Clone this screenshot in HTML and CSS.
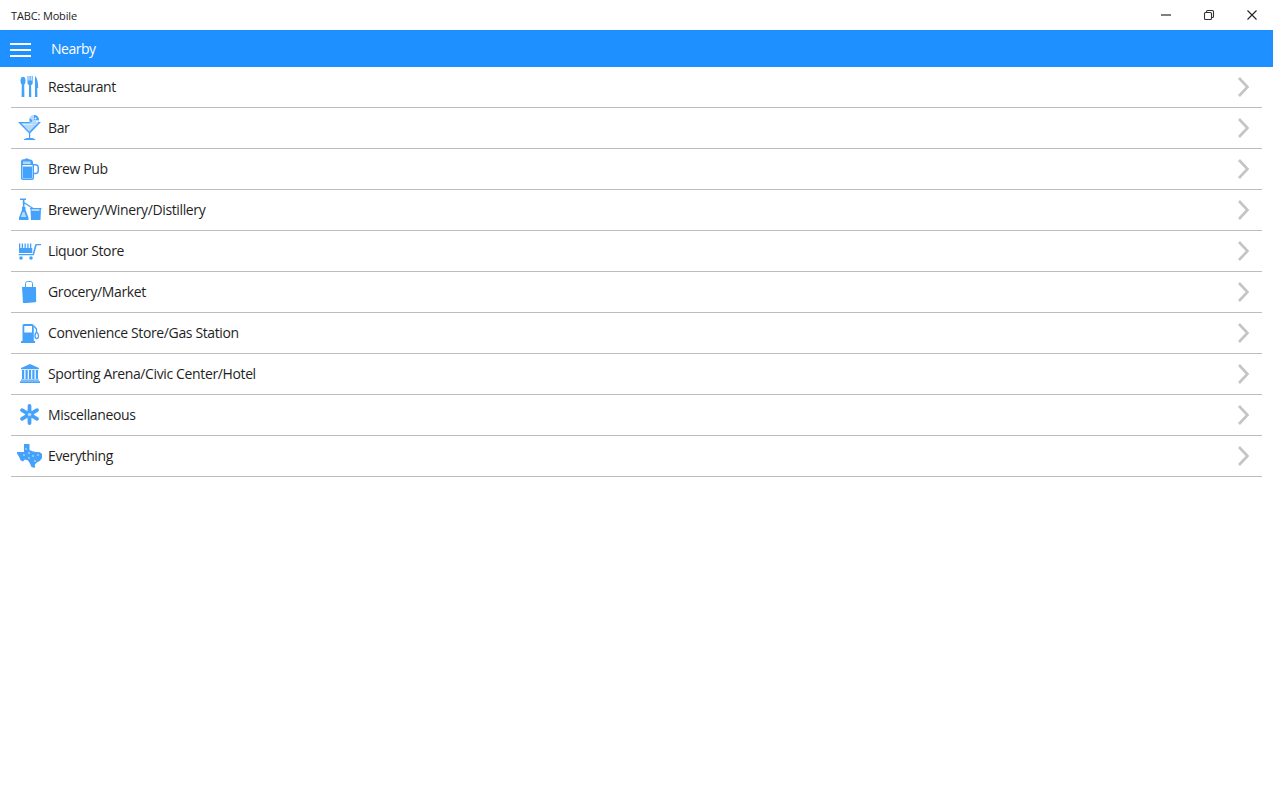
FILE: index.html
```html
<!DOCTYPE html>
<html lang="en">
<head>
    <meta charset="UTF-8">
    <meta name="viewport" content="width=device-width, initial-scale=1.0">
    <title>TABC: Mobile</title>
    <link rel="stylesheet" href="styles.css">
</head>
<body>

    <!-- Window title bar -->
    <div class="titlebar">
        <span class="app-title">TABC: Mobile</span>
        <div class="window-buttons">
            <span class="window-button">
                <svg width="12" height="12" viewBox="0 0 12 12"><path d="M1 6h10" stroke="#555" stroke-width="1.500"/></svg>
            </span>
            <span class="window-button">
                <svg width="12" height="12" viewBox="0 0 12 12" fill="none" stroke="#333" stroke-width="1.100"><rect x="1.500" y="3.500" width="7" height="7" rx="1"/><path d="M3.500 3.500v-1a1 1 0 0 1 1-1h5a1 1 0 0 1 1 1v5a1 1 0 0 1-1 1h-1"/></svg>
            </span>
            <span class="window-button">
                <svg width="12" height="12" viewBox="0 0 12 12"><path d="M1.500 1.500l9 9M10.500 1.500l-9 9" stroke="#222" stroke-width="1.100"/></svg>
            </span>
        </div>
    </div>

    <div class="appbar">
        <span class="hamburger"><i></i><i></i><i></i></span>
        <span class="page-title">Nearby</span>
    </div>

    <ul class="category-list">
        <li class="category">
            <svg class="category-icon" viewBox="0 0 30 30">
                <ellipse cx="8" cy="8.800" rx="2.500" ry="4"/>
                <path d="M6.800 11h2.400l.2 14H6.600z"/>
                <path d="M12.500 4h1v4.500h1V4h1.200v4.500h1V4h1v7c0 1-.7 1.700-1.600 2l.2 12h-2.400l.2-12c-.9-.3-1.600-1-1.600-2z"/>
                <path d="M20 4c2 1.500 3.200 6 3.200 12h-1l.2 9H20z"/>
            </svg>
            <span class="category-name">Restaurant</span>
            <svg class="chevron" viewBox="0 0 14 24"><path d="M3 3l8.500 9L3 21"/></svg>
        </li>
        <li class="category">
            <svg class="category-icon" viewBox="0 0 30 30">
                <path class="icon-light" d="M6 11.500h16l-8 8.500z"/>
                <path d="M3 9h23l-10.800 11.300V25c2 .1 4 .4 5 1.300v.7H9v-.7c1-.9 3-1.200 5-1.300v-4.700zM6.500 10.500l7.800 8.300 8-8.300z" fill-rule="evenodd"/>
                <circle class="icon-light" cx="19" cy="7" r="5"/>
                <path d="M19 2a5 5 0 0 1 5 5h-5zM14.500 5.500l3 1.500-1.500 3a5 5 0 0 1-1.500-4.500z"/>
                <circle class="icon-dot" cx="20.500" cy="5.500" r="1"/>
                <circle class="icon-dot" cx="22" cy="8.500" r=".8"/>
            </svg>
            <span class="category-name">Bar</span>
            <svg class="chevron" viewBox="0 0 14 24"><path d="M3 3l8.500 9L3 21"/></svg>
        </li>
        <li class="category">
            <svg class="category-icon" viewBox="0 0 30 30">
                <path d="M6 8c0-2 1.500-3 3-2.500C10 4 13.500 4 14.500 5.500c1.800-.5 3.500.8 3.500 2.800V10h2.500c2 0 3.500 1.300 3.500 3.300v3.400c0 2-1.500 3.500-3.500 3.500H19V24c0 1.300-.7 2-2 2H8c-1.300 0-2-.7-2-2zM7.500 11v13c0 .4.200.6.500.6h9c.3 0 .5-.2.500-.6V11zM19 11.500v7.200h1.500c1.200 0 2-.8 2-2v-3.400c0-1-.8-1.800-2-1.800z" fill-rule="evenodd"/>
                <path d="M8 12.500h9V24.200H8z"/>
                <path class="icon-light" d="M8 7.500h7.500v2.500H8z"/>
            </svg>
            <span class="category-name">Brew Pub</span>
            <svg class="chevron" viewBox="0 0 14 24"><path d="M3 3l8.500 9L3 21"/></svg>
        </li>
        <li class="category">
            <svg class="category-icon" viewBox="0 0 30 30">
                <path d="M5 3.500h6V5H9.500v2.200l9 5.800-.7 1.100-8.300-5.300V12h1v3l3 7.500V25H4v-2.500L7 15v-3h.8V5H5z"/>
                <path class="icon-light" d="M7.800 17h1.500l2 5H5.800z"/>
                <path d="M15 13h11.500v1H26l-.5 11h-9.500l-.5-11H15z"/>
                <path class="icon-gap" d="M16.600 14.200h7.800v1.600h-7.800z"/>
            </svg>
            <span class="category-name">Brewery/Winery/Distillery</span>
            <svg class="chevron" viewBox="0 0 14 24"><path d="M3 3l8.500 9L3 21"/></svg>
        </li>
        <li class="category">
            <svg class="category-icon" viewBox="0 0 30 30">
                <path d="M4 7.500h1.300V12h1.400V7.500H8V12h1.500V7.500h1.300V12h1.500V7.500h1.300V12h1.400V7.500h1.300V12h1v5H4z"/>
                <path d="M3.700 18h14l2.300-9c.2-.7.700-1 1.300-1H26v1.300h-4.300l-2.800 10H3.700z"/>
                <circle cx="6" cy="22" r="1.800"/>
                <circle cx="16" cy="22" r="1.800"/>
            </svg>
            <span class="category-name">Liquor Store</span>
            <svg class="chevron" viewBox="0 0 14 24"><path d="M3 3l8.500 9L3 21"/></svg>
        </li>
        <li class="category">
            <svg class="category-icon" viewBox="0 0 30 30">
                <path d="M7 10h14l.2 15c-4.500.7-9 .9-13.200 1z"/>
                <path class="icon-handle" d="M10.500 11V6.500c0-1.200.8-2 2-2h3c1.200 0 2 .8 2 2V11"/>
            </svg>
            <span class="category-name">Grocery/Market</span>
            <svg class="chevron" viewBox="0 0 14 24"><path d="M3 3l8.500 9L3 21"/></svg>
        </li>
        <li class="category">
            <svg class="category-icon" viewBox="0 0 30 30">
                <path d="M9 6h8c1 0 1.800.8 1.800 1.800V23H7.500V7.800C7.500 6.800 8 6 9 6zM9.300 8v6.500h7.700V8z" fill-rule="evenodd"/>
                <path d="M6 23h14v2H6z"/>
                <path class="icon-hose" d="M19 8l2.500 3v3c1.300 1 2 2.500 2 4 0 1.500-.7 2.500-1.700 2.500s-1.800-1-1.800-2.500c0-1.500.6-3 1.500-4"/>
            </svg>
            <span class="category-name">Convenience Store/Gas Station</span>
            <svg class="chevron" viewBox="0 0 14 24"><path d="M3 3l8.500 9L3 21"/></svg>
        </li>
        <li class="category">
            <svg class="category-icon" viewBox="0 0 30 30">
                <path d="M15 5l9 4v1.300H6V9z"/>
                <path d="M7 11h2.200v9H7zM10.500 11h2.200v9h-2.200zM13.900 11h2.200v9h-2.200zM17.300 11h2.200v9h-2.200zM20.800 11H23v9h-2.200z"/>
                <path d="M6 20.500h18v1.300H6zM5 22.300h20V24H5z"/>
            </svg>
            <span class="category-name">Sporting Arena/Civic Center/Hotel</span>
            <svg class="chevron" viewBox="0 0 14 24"><path d="M3 3l8.500 9L3 21"/></svg>
        </li>
        <li class="category">
            <svg class="category-icon" viewBox="0 0 30 30">
                <circle class="icon-light" cx="14.500" cy="14.500" r="4.500"/>
                <path class="icon-petals" d="M14.500 6v5M14.500 18v5M7 10.200l4.500 2.600M17.500 16.200l4.500 2.600M7 18.800l4.500-2.600M17.500 12.800l4.500-2.600"/>
            </svg>
            <span class="category-name">Miscellaneous</span>
            <svg class="chevron" viewBox="0 0 14 24"><path d="M3 3l8.500 9L3 21"/></svg>
        </li>
        <li class="category">
            <svg class="category-icon" viewBox="0 0 30 30">
                <path d="M9 3h5.500v6l3 1.300 3.500.7 4 .2 2 1.800v4l-2 2.700-3.500 2-1.500 1.700-.2 3.600-3.300-1-1.700-3.700-2-3-3-.7-1.800 2-2.500-1.300-1.500-3.500L2 12.500v-1.500h7z"/>
                <g class="icon-dots">
                    <circle cx="11" cy="8" r=".9"/>
                    <circle cx="9" cy="14" r=".9"/>
                    <circle cx="14" cy="12" r=".9"/>
                    <circle cx="18" cy="15" r=".9"/>
                    <circle cx="23" cy="14" r=".9"/>
                    <circle cx="14" cy="17" r=".9"/>
                    <circle cx="20" cy="20" r=".9"/>
                </g>
            </svg>
            <span class="category-name">Everything</span>
            <svg class="chevron" viewBox="0 0 14 24"><path d="M3 3l8.500 9L3 21"/></svg>
        </li>
    </ul>

</body>
</html>
```

FILE: styles.css
```css
body {
    margin: 0;
    font-family: "Open Sans", "Noto Sans", sans-serif;
    background: #fff;
    color: #1f1f1f;
}

/* Title bar */
.titlebar {
    display: flex;
    align-items: center;
    height: 30px;
    padding-left: 11px;
}
.app-title {
    font-size: 11px;
    letter-spacing: -0.15px;
    color: #222;
}
.window-buttons {
    display: flex;
    margin-left: auto;
}
.window-button {
    display: flex;
    align-items: center;
    justify-content: center;
    width: 43px;
    height: 30px;
}

/* App bar */
.appbar {
    display: flex;
    align-items: center;
    height: 37px;
    background: #1e90ff;
    color: #fff;
}
.hamburger {
    display: flex;
    flex-direction: column;
    gap: 4px;
    width: 21px;
    margin-left: 10px;
    margin-top: 3px;
}
.hamburger i {
    display: block;
    height: 2px;
    background: #fff;
}
.page-title {
    margin-left: 20px;
    font-size: 14px;
    letter-spacing: -0.5px;
}

/* Category rows */
.category-list {
    list-style: none;
    margin: 0 11px;
    padding: 0;
}
.category {
    display: flex;
    align-items: center;
    height: 40px;
    border-bottom: 1px solid #bdbdbd;
}
.category-icon {
    width: 30px;
    height: 30px;
    margin-left: 4px;
    fill: #45a2fb;
}
.category-icon .icon-light {
    fill: #b5dafd;
}
.category-icon .icon-dot {
    fill: #fff;
}
.category-icon .icon-dots {
    fill: #a9d4fd;
}
.category-icon .icon-gap {
    fill: #d5eafe;
}
.category-icon .icon-handle {
    fill: none;
    stroke: #45a2fb;
    stroke-width: 1;
}
.category-icon .icon-hose {
    fill: none;
    stroke: #45a2fb;
    stroke-width: 1.300;
}
.category-icon .icon-petals {
    fill: none;
    stroke: #45a2fb;
    stroke-width: 3.800;
    stroke-linecap: round;
}
.category-name {
    margin-left: 3px;
    margin-bottom: 2px;
    font-size: 14px;
    letter-spacing: -0.37px;
}
.chevron {
    width: 14px;
    height: 24px;
    margin-left: auto;
    margin-right: 12px;
    fill: none;
    stroke: #c4c4c4;
    stroke-width: 2.600;
}
```
